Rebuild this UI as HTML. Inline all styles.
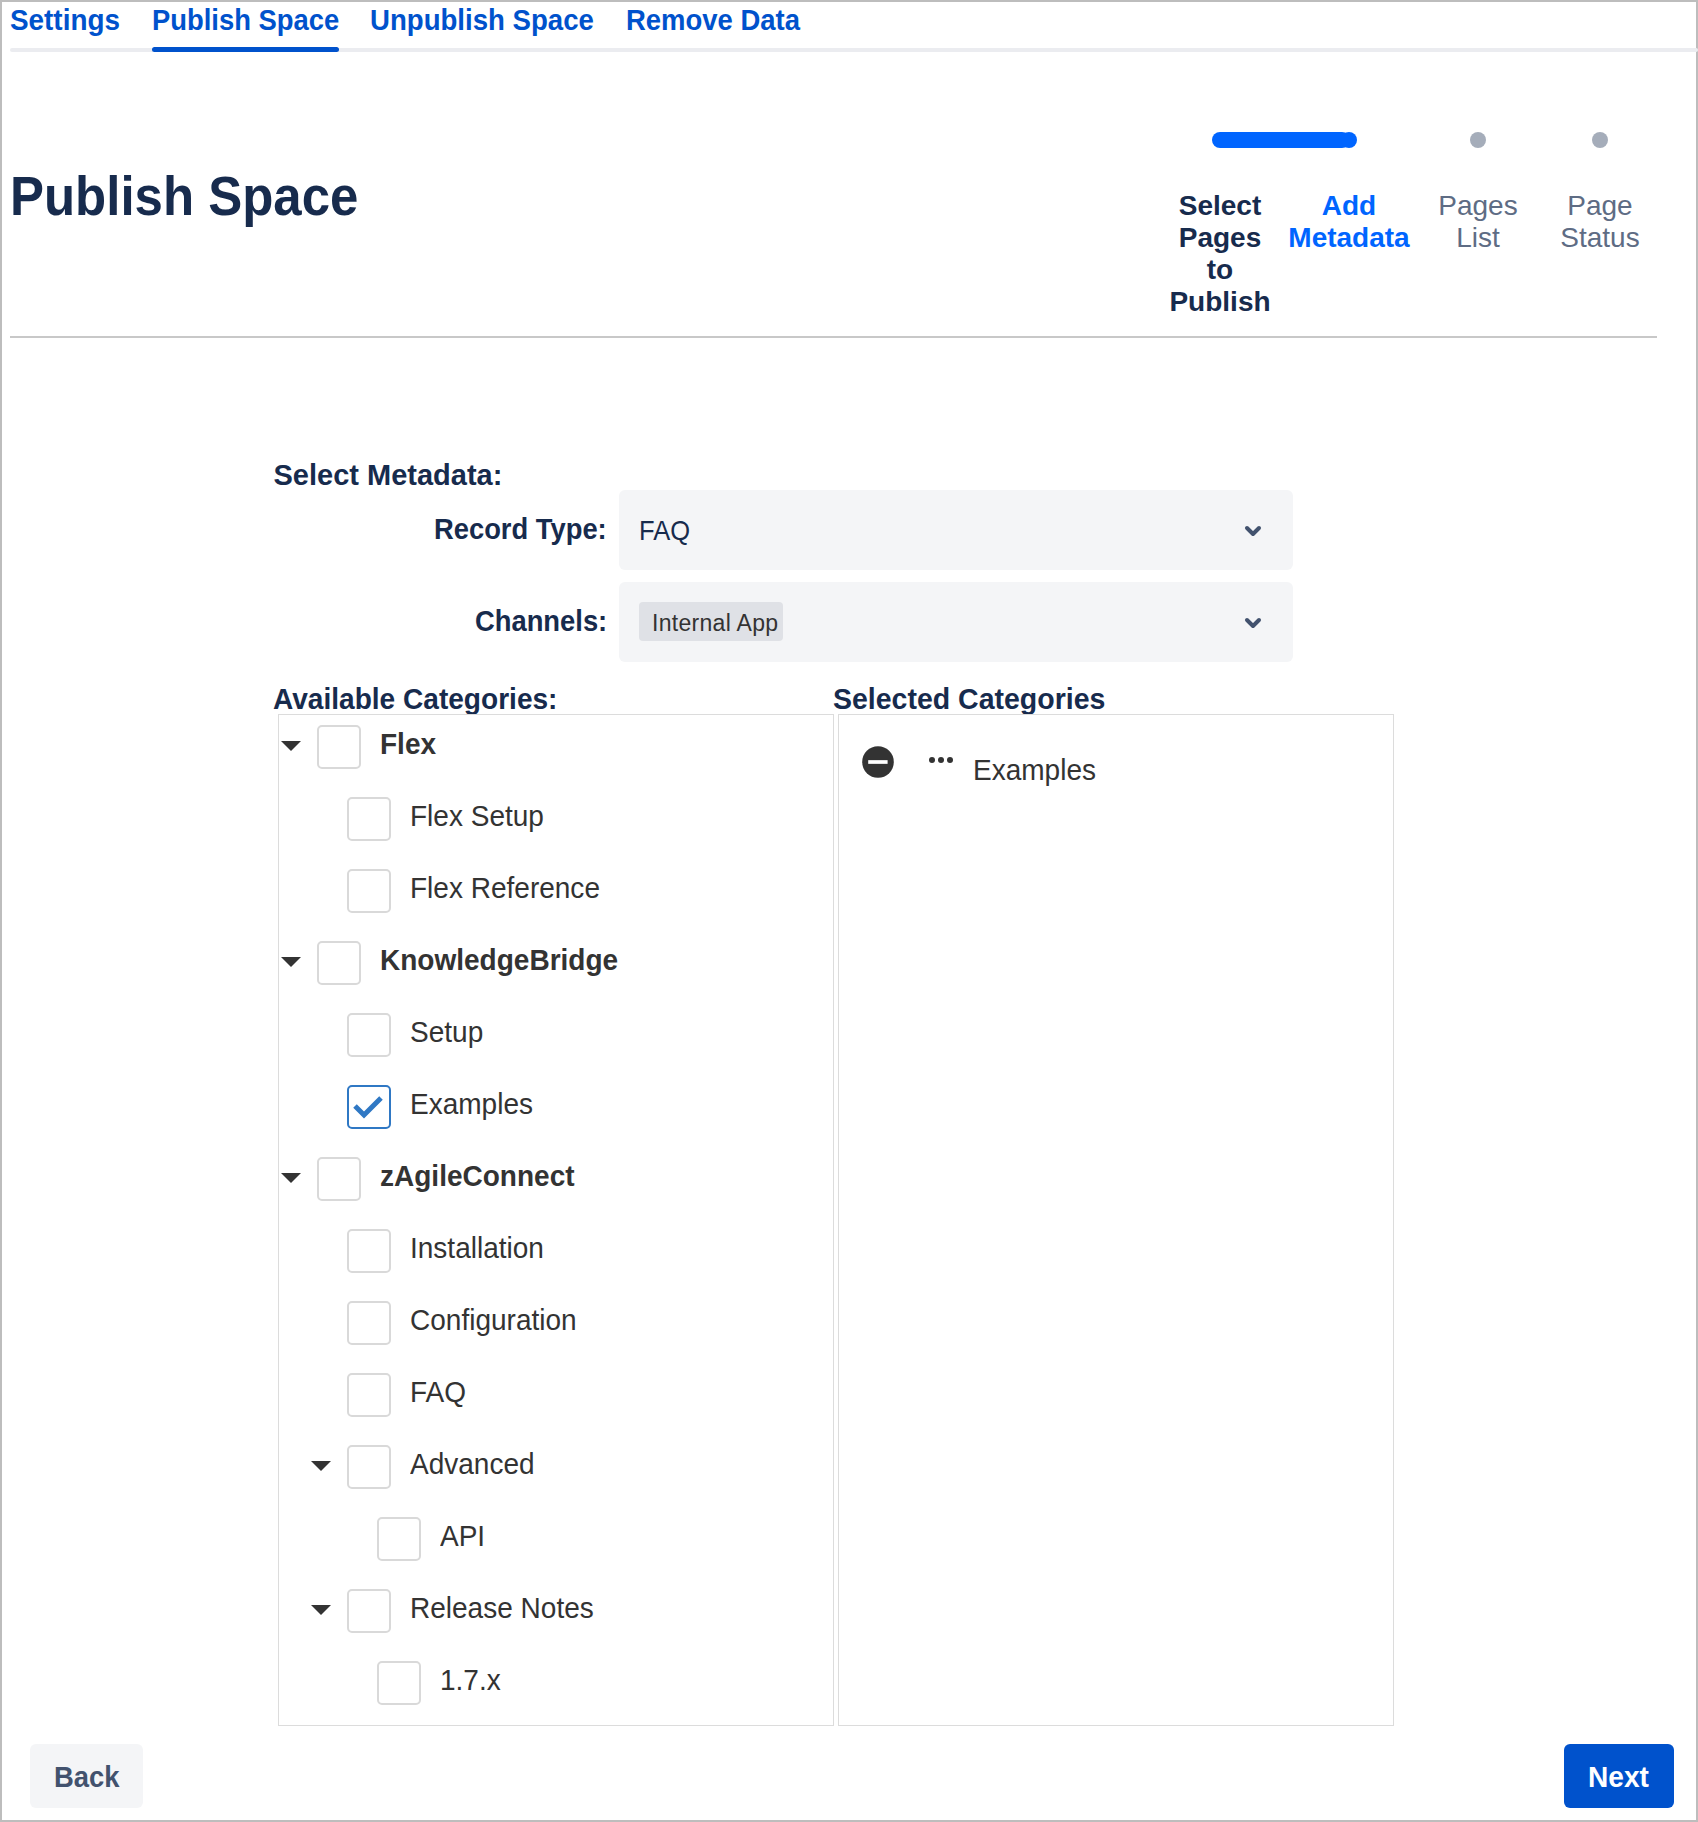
<!DOCTYPE html>
<html>
<head>
<meta charset="utf-8">
<style>
html,body{margin:0;padding:0;}
body{width:1698px;height:1822px;position:relative;overflow:hidden;background:#fff;font-family:"Liberation Sans",sans-serif;}
.frame{position:absolute;left:0;top:0;width:1694px;height:1818px;border:2px solid #bdbdbd;}
.a{position:absolute;white-space:nowrap;}
.tab{font-size:30px;font-weight:bold;color:#0052cc;line-height:34px;top:3px;transform-origin:0 0;}
.tabline{position:absolute;left:10px;top:48px;width:1688px;height:4px;background:#ebecf0;border-radius:2px;}
.tabact{position:absolute;left:152px;top:47px;width:187px;height:5px;background:#0052cc;border-radius:3px;}
.title{font-size:56px;font-weight:bold;color:#172b4d;line-height:64px;}
.step{font-size:28px;line-height:32px;text-align:center;width:160px;}
.lbl{font-size:29px;font-weight:bold;color:#172b4d;line-height:32px;transform-origin:0 0;}
.sel{position:absolute;left:619px;width:674px;height:80px;background:#f4f5f7;border-radius:6px;}
.chev{position:absolute;left:1243px;width:20px;height:14px;}
.box{position:absolute;top:714px;width:554px;height:1010px;border:1px solid #dcdcdc;}
.row{font-size:29px;color:#333;line-height:32px;transform:scaleX(0.966);transform-origin:0 0;}
.cb{position:absolute;width:40px;height:40px;border:2px solid #d9d9d9;border-radius:5px;background:#fff;}
.tri{position:absolute;width:0;height:0;border-left:10px solid transparent;border-right:10px solid transparent;border-top:10px solid #333;}
.btn{position:absolute;top:1744px;height:64px;border-radius:6px;}
</style>
</head>
<body>
<div class="frame"></div>

<!-- tabs -->
<div class="tabline"></div>
<div class="tabact"></div>
<div class="a tab" id="t1" style="left:10.0px;transform:scaleX(0.929);">Settings</div>
<div class="a tab" id="t2" style="left:151.7px;transform:scaleX(0.913);">Publish Space</div>
<div class="a tab" id="t3" style="left:370.4px;transform:scaleX(0.92);">Unpublish Space</div>
<div class="a tab" id="t4" style="left:625.6px;transform:scaleX(0.915);">Remove Data</div>

<!-- title -->
<div class="a title" style="left:10px;top:164px;transform:scaleX(0.91);transform-origin:0 0;">Publish Space</div>

<!-- progress tracker -->
<div class="a" style="left:1212px;top:132px;width:138px;height:16px;background:#0065ff;border-radius:8px;"></div>
<div class="a" style="left:1341px;top:132px;width:16px;height:16px;background:#0065ff;border-radius:8px;"></div>
<div class="a" style="left:1470px;top:132px;width:16px;height:16px;background:#a5adba;border-radius:8px;"></div>
<div class="a" style="left:1592px;top:132px;width:16px;height:16px;background:#a5adba;border-radius:8px;"></div>
<div class="a step" style="left:1140px;top:190px;color:#172b4d;font-weight:bold;">Select<br>Pages<br>to<br>Publish</div>
<div class="a step" style="left:1269px;top:190px;color:#0065ff;font-weight:bold;">Add<br>Metadata</div>
<div class="a step" style="left:1398px;top:190px;color:#5e6c84;">Pages<br>List</div>
<div class="a step" style="left:1520px;top:190px;color:#5e6c84;">Page<br>Status</div>
<div class="a" style="left:10px;top:336px;width:1647px;height:2px;background:#c8c8c8;"></div>

<!-- metadata form -->
<div class="a lbl" id="l1" style="left:273.5px;transform:scaleX(1.0);top:459px;">Select Metadata:</div>
<div class="a lbl" id="l2" style="left:433.8px;transform:scaleX(0.943);top:513px;">Record Type:</div>
<div class="a lbl" id="l3" style="left:475.4px;transform:scaleX(0.943);top:605px;">Channels:</div>
<div class="sel" style="top:490px;"></div>
<div class="sel" style="top:582px;"></div>
<div class="a" id="faq" style="left:639px;top:515px;font-size:28px;line-height:32px;color:#172b4d;transform:scaleX(0.91);transform-origin:0 0;">FAQ</div>
<div class="a" style="left:639px;top:602px;width:144px;height:39px;background:#dfe1e6;border-radius:4px;"></div>
<div class="a" style="left:652px;top:609px;font-size:23px;line-height:28px;color:#333;letter-spacing:0.3px;">Internal App</div>
<svg class="chev" style="top:524px;" viewBox="0 0 20 14"><path d="M4 4 L10 10 L16 4" fill="none" stroke="#42526e" stroke-width="4" stroke-linecap="round" stroke-linejoin="round"/></svg>
<svg class="chev" style="top:616px;" viewBox="0 0 20 14"><path d="M4 4 L10 10 L16 4" fill="none" stroke="#42526e" stroke-width="4" stroke-linecap="round" stroke-linejoin="round"/></svg>

<div class="a lbl" id="l4" style="left:273.1px;transform:scaleX(0.968);top:683px;">Available Categories:</div>
<div class="a lbl" id="l5" style="left:833.0px;transform:scaleX(0.9825);top:683px;">Selected Categories</div>

<div class="box" style="left:278px;"></div>
<div class="box" style="left:838px;"></div>

<!-- TREE -->
<div class="tri" style="left:281px;top:741px;"></div>
<div class="cb" style="left:317px;top:725px;"></div>
<div class="a row" id="r1" style="left:380px;top:728px;font-weight:bold">Flex</div>
<div class="cb" style="left:347px;top:797px;"></div>
<div class="a row" id="r2" style="left:410px;top:800px">Flex Setup</div>
<div class="cb" style="left:347px;top:869px;"></div>
<div class="a row" id="r3" style="left:410px;top:872px">Flex Reference</div>
<div class="tri" style="left:281px;top:957px;"></div>
<div class="cb" style="left:317px;top:941px;"></div>
<div class="a row" id="r4" style="left:380px;top:944px;font-weight:bold">KnowledgeBridge</div>
<div class="cb" style="left:347px;top:1013px;"></div>
<div class="a row" id="r5" style="left:410px;top:1016px">Setup</div>
<div class="cb" style="left:347px;top:1085px;border-color:#2f78c4;"></div>
<svg class="a" style="left:347px;top:1085px;" width="44" height="44" viewBox="0 0 44 44"><path d="M8 21 L17 30 L34 13" fill="none" stroke="#2f78c4" stroke-width="5"/></svg>
<div class="a row" id="r6" style="left:410px;top:1088px">Examples</div>
<div class="tri" style="left:281px;top:1173px;"></div>
<div class="cb" style="left:317px;top:1157px;"></div>
<div class="a row" id="r7" style="left:380px;top:1160px;font-weight:bold">zAgileConnect</div>
<div class="cb" style="left:347px;top:1229px;"></div>
<div class="a row" id="r8" style="left:410px;top:1232px">Installation</div>
<div class="cb" style="left:347px;top:1301px;"></div>
<div class="a row" id="r9" style="left:410px;top:1304px">Configuration</div>
<div class="cb" style="left:347px;top:1373px;"></div>
<div class="a row" id="r10" style="left:410px;top:1376px">FAQ</div>
<div class="tri" style="left:311px;top:1461px;"></div>
<div class="cb" style="left:347px;top:1445px;"></div>
<div class="a row" id="r11" style="left:410px;top:1448px">Advanced</div>
<div class="cb" style="left:377px;top:1517px;"></div>
<div class="a row" id="r12" style="left:440px;top:1520px">API</div>
<div class="tri" style="left:311px;top:1605px;"></div>
<div class="cb" style="left:347px;top:1589px;"></div>
<div class="a row" id="r13" style="left:410px;top:1592px">Release Notes</div>
<div class="cb" style="left:377px;top:1661px;"></div>
<div class="a row" id="r14" style="left:440px;top:1664px">1.7.x</div>

<!-- selected -->
<svg class="a" style="left:862px;top:746px;" width="32" height="32" viewBox="0 0 32 32"><circle cx="16" cy="16" r="15.8" fill="#333"/><rect x="6.2" y="14.15" width="19.4" height="3.7" fill="#fff"/></svg>
<svg class="a" style="left:928px;top:756px;" width="26" height="8" viewBox="0 0 26 8"><circle cx="4" cy="4" r="3" fill="#333"/><circle cx="13" cy="4" r="3" fill="#333"/><circle cx="22" cy="4" r="3" fill="#333"/></svg>
<div class="a row" id="r15" style="left:973px;top:754px;">Examples</div>

<!-- buttons -->
<div class="btn" style="left:30px;width:113px;background:#f4f5f7;"></div>
<div class="a" id="b1" style="left:54.1px;transform:scaleX(0.913);top:1760px;font-size:30px;font-weight:bold;line-height:34px;color:#42526e;transform-origin:0 0;">Back</div>
<div class="btn" style="left:1564px;width:110px;background:#0052cc;"></div>
<div class="a" id="b2" style="left:1588.1px;transform:scaleX(0.937);top:1760px;font-size:30px;font-weight:bold;line-height:34px;color:#fff;transform-origin:0 0;">Next</div>
</body>
</html>
